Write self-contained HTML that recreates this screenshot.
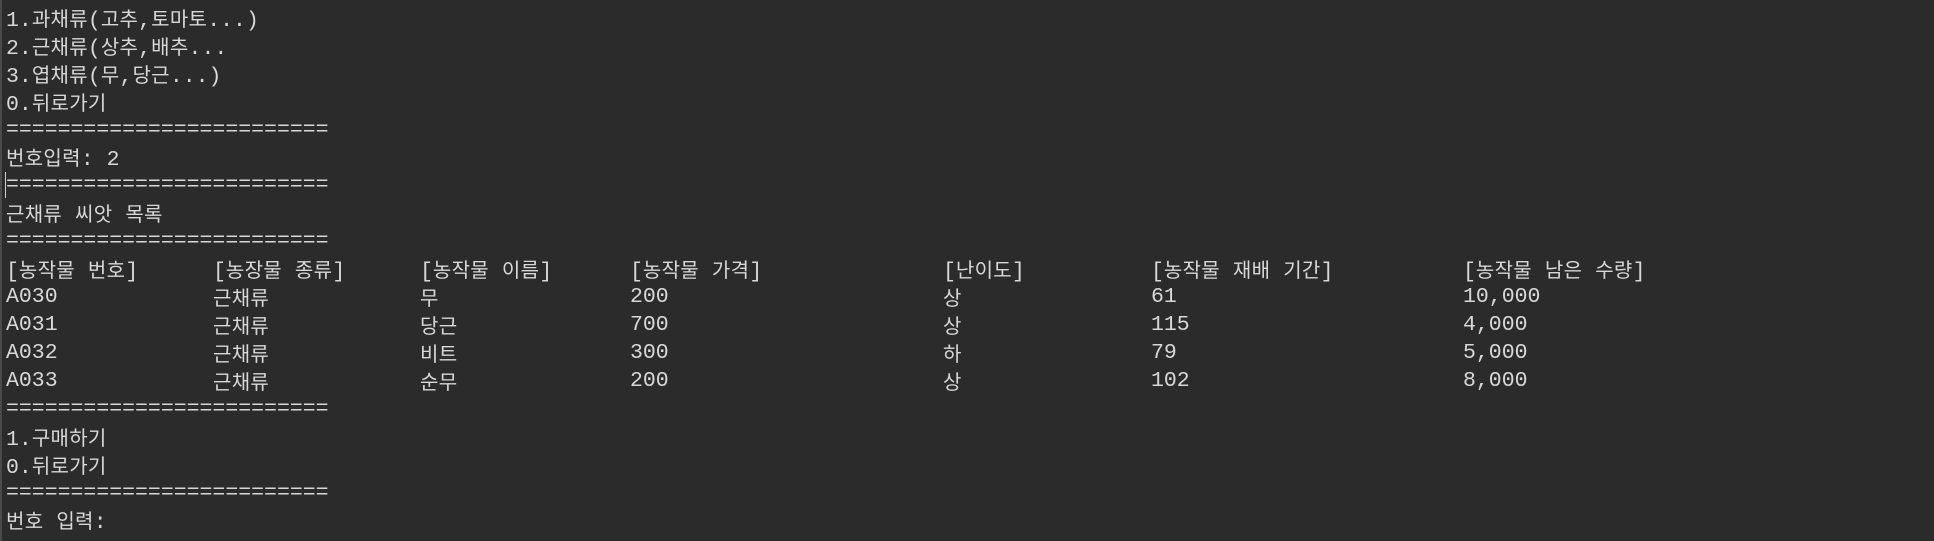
<!DOCTYPE html>
<html><head><meta charset="utf-8"><style>
html,body{margin:0;padding:0;}
body{width:1934px;height:541px;background:#2b2b2b;overflow:hidden;position:relative;color:#d8d8d8;font-family:"Liberation Mono",monospace;font-size:21.5px;}
.bar{position:absolute;left:0;top:0;width:2px;height:541px;background:#4a4a4a;}
.l{position:absolute;left:6px;height:28px;line-height:28px;white-space:pre;}
.k{font-family:"Noto Sans CJK KR","NanumGothic",sans-serif;font-size:20px;letter-spacing:0.3px;}
.cur{position:absolute;left:5px;top:172px;width:1px;height:26px;background:#cfcfcf;}
</style></head><body>
<div class="bar"></div>
<div class="cur"></div>
<div class="l" style="top:4px">1.<span class="k">과채류</span>(<span class="k">고추</span>,<span class="k">토마토</span>...)</div>
<div class="l" style="top:32px">2.<span class="k">근채류</span>(<span class="k">상추</span>,<span class="k">배추</span>...</div>
<div class="l" style="top:60px">3.<span class="k">엽채류</span>(<span class="k">무</span>,<span class="k">당근</span>...)</div>
<div class="l" style="top:88px">0.<span class="k">뒤로가기</span></div>
<div class="l" style="top:116px">=========================</div>
<div class="l" style="top:143px"><span class="k">번호입력</span>: 2</div>
<div class="l" style="top:171px">=========================</div>
<div class="l" style="top:199px"><span class="k">근채류</span> <span class="k">씨앗</span> <span class="k">목록</span></div>
<div class="l" style="top:227px">=========================</div>

<div class="l" style="top:255px;left:6px">[<span class="k">농작물</span> <span class="k">번호</span>]</div>
<div class="l" style="top:255px;left:213px">[<span class="k">농장물</span> <span class="k">종류</span>]</div>
<div class="l" style="top:255px;left:420px">[<span class="k">농작물</span> <span class="k">이름</span>]</div>
<div class="l" style="top:255px;left:630px">[<span class="k">농작물</span> <span class="k">가격</span>]</div>
<div class="l" style="top:255px;left:943px">[<span class="k">난이도</span>]</div>
<div class="l" style="top:255px;left:1151px">[<span class="k">농작물</span> <span class="k">재배</span> <span class="k">기간</span>]</div>
<div class="l" style="top:255px;left:1463px">[<span class="k">농작물</span> <span class="k">남은</span> <span class="k">수량</span>]</div>

<div class="l" style="top:283px;left:6px">A030</div><div class="l k" style="top:283px;left:213px">근채류</div><div class="l k" style="top:283px;left:420px">무</div><div class="l" style="top:283px;left:630px">200</div><div class="l k" style="top:283px;left:943px">상</div><div class="l" style="top:283px;left:1151px">61</div><div class="l" style="top:283px;left:1463px">10,000</div>
<div class="l" style="top:311px;left:6px">A031</div><div class="l k" style="top:311px;left:213px">근채류</div><div class="l k" style="top:311px;left:420px">당근</div><div class="l" style="top:311px;left:630px">700</div><div class="l k" style="top:311px;left:943px">상</div><div class="l" style="top:311px;left:1151px">115</div><div class="l" style="top:311px;left:1463px">4,000</div>
<div class="l" style="top:339px;left:6px">A032</div><div class="l k" style="top:339px;left:213px">근채류</div><div class="l k" style="top:339px;left:420px">비트</div><div class="l" style="top:339px;left:630px">300</div><div class="l k" style="top:339px;left:943px">하</div><div class="l" style="top:339px;left:1151px">79</div><div class="l" style="top:339px;left:1463px">5,000</div>
<div class="l" style="top:367px;left:6px">A033</div><div class="l k" style="top:367px;left:213px">근채류</div><div class="l k" style="top:367px;left:420px">순무</div><div class="l" style="top:367px;left:630px">200</div><div class="l k" style="top:367px;left:943px">상</div><div class="l" style="top:367px;left:1151px">102</div><div class="l" style="top:367px;left:1463px">8,000</div>

<div class="l" style="top:395px">=========================</div>
<div class="l" style="top:423px">1.<span class="k">구매하기</span></div>
<div class="l" style="top:451px">0.<span class="k">뒤로가기</span></div>
<div class="l" style="top:479px">=========================</div>
<div class="l" style="top:506px"><span class="k">번호</span> <span class="k">입력</span>:</div>
</body></html>
